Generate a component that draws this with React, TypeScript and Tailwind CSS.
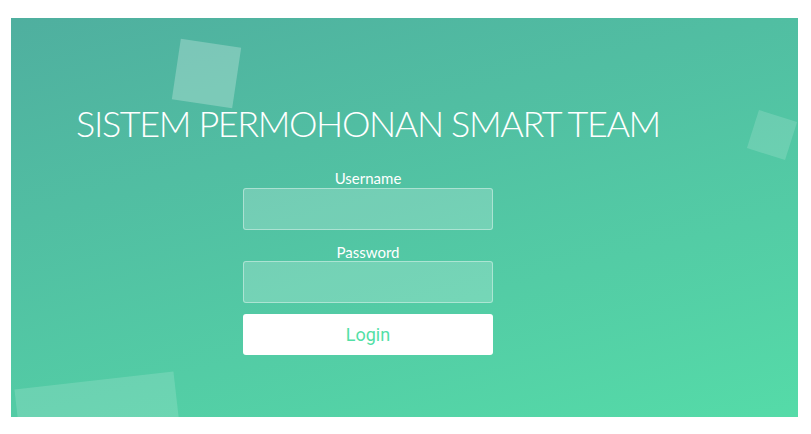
import React from 'react'

const squares = [
  'left-[165px] top-[25px] h-[61px] w-[61px] rotate-[8.5deg] bg-white/25',
  'left-[741px] top-[97px] h-[40px] w-[40px] rotate-[17.5deg] bg-white/15',
  'left-[12px] top-[362px] h-[160px] w-[160px] -rotate-[6.5deg] bg-white/15',
]

export default function App() {
  return (
    <div className="h-[434px] w-[811px] bg-white pl-[11px] pt-[18px]" style={{ fontFamily: 'Lato, "Open Sans", sans-serif' }}>
      <div className="relative h-[399px] w-[787px] overflow-hidden bg-[linear-gradient(165deg,#4faf9f_0%,#55dba8_100%)]">
        {/* decorative squares */}
        {squares.map((s) => (
          <div key={s} className={`absolute ${s}`} />
        ))}

        <div className="relative flex w-[714px] flex-col items-center pt-[81px]">
          <h1 className="text-[36px] font-light leading-[48px] tracking-[-1.4px] text-white whitespace-nowrap">
            SISTEM PERMOHONAN SMART TEAM
          </h1>

          <form className="mt-[22px] flex w-[250px] flex-col items-center" onSubmit={(e) => e.preventDefault()}>
            <label className="text-[15px] leading-[18px] text-white">Username</label>
            <input
              type="text"
              className="mt-px h-[42px] w-full rounded-[3px] border border-white/40 bg-white/20 px-3 text-white outline-none"
            />
            <label className="mt-[13px] text-[15px] leading-[18px] text-white">Password</label>
            <input
              type="password"
              className="h-[42px] w-full rounded-[3px] border border-white/40 bg-white/20 px-3 text-white outline-none"
            />
            <button
              type="submit"
              className="mt-[11px] h-[41px] w-full rounded-[3px] bg-white text-[18px] text-[#53e0a6]"
              style={{ fontFamily: 'Roboto, sans-serif' }}
            >
              Login
            </button>
          </form>
        </div>
      </div>
    </div>
  )
}
